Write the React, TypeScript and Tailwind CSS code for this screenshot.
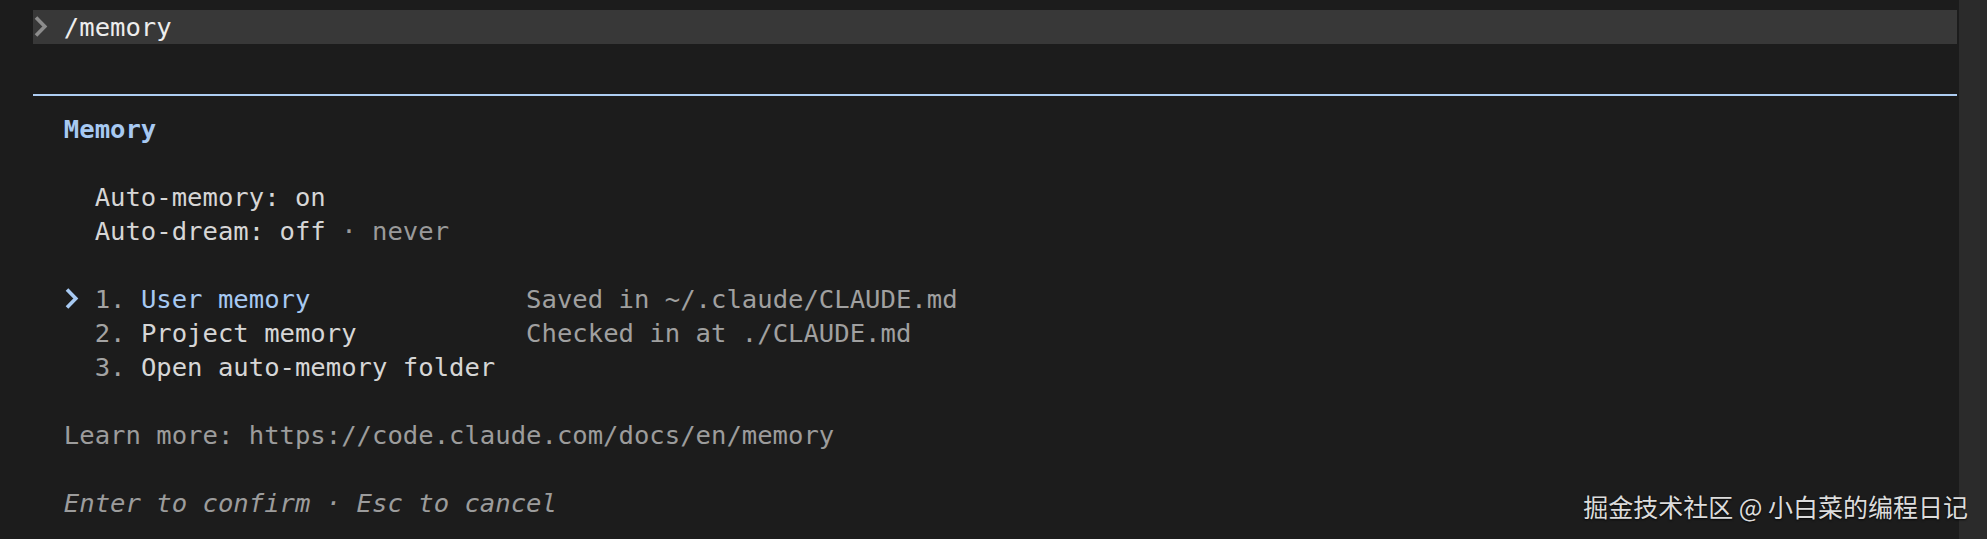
import React from 'react';

const BLUE = 'text-[#a7c9f2]';

function Chevron({ color }: { color: string }) {
  return (
    <span className="inline-block w-[1ch] h-[34px] align-top">
      <svg viewBox="0 0 15.4 34" className="w-full h-full">
        <polyline points="3,7.5 11.8,16.5 3,25.5" fill="none" stroke={color} strokeWidth="3.6" strokeLinecap="butt" strokeLinejoin="miter" />
      </svg>
    </span>
  );
}

function Row({ children, className = '' }: { children?: React.ReactNode; className?: string }) {
  return <div className={`h-[34px] leading-[34px] whitespace-pre ${className}`}>{children}</div>;
}

export default function App() {
  return (
    <div className="relative h-[539px] w-full overflow-hidden bg-[#1c1c1c] flex font-['DejaVu_Sans_Mono',monospace] text-[25.6px] text-[#d6d6d6]">
      <div className="flex-1 pt-[10px] pl-[33px] pr-[2px]">
        {/* prompt */}
        <Row className="bg-[#383838] text-[#ededed]">
          <Chevron color="#8c8c8c" />
          {' /memory'}
        </Row>
        <Row />
        {/* separator */}
        <Row className="flex items-center">
          <div className="h-[2px] w-full bg-[#aecdf2]" />
        </Row>
        <Row>
          {'  '}
          <span className={`font-bold ${BLUE}`}>Memory</span>
        </Row>
        <Row />
        <Row>{'    Auto-memory: on'}</Row>
        <Row>
          {'    Auto-dream: off '}
          <span className="text-[#9a9a9a]">· never</span>
        </Row>
        <Row />
        <Row>
          {'  '}
          <Chevron color="#a7c9f2" />
          <span className="text-[#a3a3a3]">{' 1. '}</span>
          <span className={BLUE}>User memory</span>
          <span className="text-[#a0a0a0]">{'              Saved in ~/.claude/CLAUDE.md'}</span>
        </Row>
        <Row>
          <span className="text-[#a3a3a3]">{'    2. '}</span>
          Project memory
          <span className="text-[#a0a0a0]">{'           Checked in at ./CLAUDE.md'}</span>
        </Row>
        <Row>
          <span className="text-[#a3a3a3]">{'    3. '}</span>
          Open auto-memory folder
        </Row>
        <Row />
        <Row className="text-[#9c9c9c]">{'  Learn more: https://code.claude.com/docs/en/memory'}</Row>
        <Row />
        <Row className="text-[#9c9c9c] italic">{'  Enter to confirm · Esc to cancel'}</Row>
      </div>
      {/* scrollbar track */}
      <div className="w-[28px] bg-[#2b2b2b]" />

      {/* watermark */}
      <div className="absolute right-[19px] bottom-[18px] font-['Noto_Sans_CJK_SC',sans-serif] text-[25px] leading-[30px] text-[#dcdcdc] [text-shadow:0_1px_2px_rgba(0,0,0,0.8)]">
        掘金技术社区 @ 小白菜的编程日记
      </div>
    </div>
  );
}
